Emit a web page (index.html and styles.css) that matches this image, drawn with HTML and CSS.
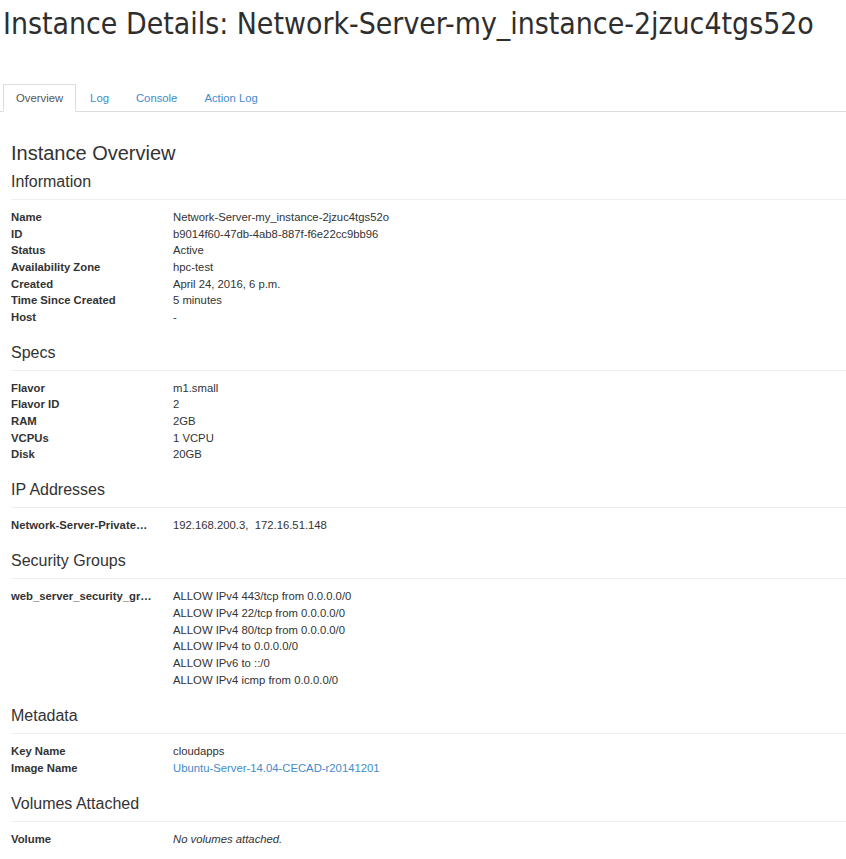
FILE: index.html
```html
<!DOCTYPE html>
<html>
<head>
<meta charset="utf-8">
<link rel="stylesheet" href="styles.css">
</head>
<body>
<div class="page-header">
  <h1 class="title">Instance Details: Network-Server-my_instance-2jzuc4tgs52o</h1>
</div>
<ul class="tabs">
  <li class="tab active"><a>Overview</a></li>
  <li class="tab"><a>Log</a></li>
  <li class="tab"><a>Console</a></li>
  <li class="tab"><a>Action Log</a></li>
</ul>
<div class="content">
  <h3 class="overview-title">Instance Overview</h3>

  <section class="info-section">
    <h4 class="section-title">Information</h4>
    <hr class="divider">
    <dl class="details">
      <dt>Name</dt><dd>Network-Server-my_instance-2jzuc4tgs52o</dd>
      <dt>ID</dt><dd>b9014f60-47db-4ab8-887f-f6e22cc9bb96</dd>
      <dt>Status</dt><dd>Active</dd>
      <dt>Availability Zone</dt><dd>hpc-test</dd>
      <dt>Created</dt><dd>April 24, 2016, 6 p.m.</dd>
      <dt>Time Since Created</dt><dd>5 minutes</dd>
      <dt>Host</dt><dd>-</dd>
    </dl>
  </section>

  <section class="info-section">
    <h4 class="section-title">Specs</h4>
    <hr class="divider">
    <dl class="details">
      <dt>Flavor</dt><dd>m1.small</dd>
      <dt>Flavor ID</dt><dd>2</dd>
      <dt>RAM</dt><dd>2GB</dd>
      <dt>VCPUs</dt><dd>1 VCPU</dd>
      <dt>Disk</dt><dd>20GB</dd>
    </dl>
  </section>

  <section class="info-section">
    <h4 class="section-title">IP Addresses</h4>
    <hr class="divider">
    <dl class="details">
      <dt title="Network-Server-Private-Network">Network-Server-Private…</dt><dd>192.168.200.3,&nbsp; 172.16.51.148</dd>
    </dl>
  </section>

  <section class="info-section">
    <h4 class="section-title">Security Groups</h4>
    <hr class="divider">
    <dl class="details">
      <dt title="web_server_security_group">web_server_security_gr…</dt>
      <dd>
        <ul class="rules">
          <li>ALLOW IPv4 443/tcp from 0.0.0.0/0</li>
          <li>ALLOW IPv4 22/tcp from 0.0.0.0/0</li>
          <li>ALLOW IPv4 80/tcp from 0.0.0.0/0</li>
          <li>ALLOW IPv4 to 0.0.0.0/0</li>
          <li>ALLOW IPv6 to ::/0</li>
          <li>ALLOW IPv4 icmp from 0.0.0.0/0</li>
        </ul>
      </dd>
    </dl>
  </section>

  <section class="info-section">
    <h4 class="section-title">Metadata</h4>
    <hr class="divider">
    <dl class="details">
      <dt>Key Name</dt><dd>cloudapps</dd>
      <dt>Image Name</dt><dd><a class="link">Ubuntu-Server-14.04-CECAD-r20141201</a></dd>
    </dl>
  </section>

  <section class="info-section">
    <h4 class="section-title">Volumes Attached</h4>
    <hr class="divider">
    <dl class="details">
      <dt>Volume</dt><dd><em>No volumes attached.</em></dd>
    </dl>
  </section>
</div>
</body>
</html>
```

FILE: styles.css
```css
html, body {
  margin: 0;
  padding: 0;
  background: #fff;
}
body {
  font-family: "Liberation Sans", Arial, sans-serif;
  font-size: 11.3px;
  color: #333;
}
.page-header {
  padding: 5px 0 0 3px;
}
.title {
  margin: 0;
  font-family: "DejaVu Sans Condensed", "DejaVu Sans", sans-serif;
  font-weight: normal;
  font-size: 29.9px;
  line-height: 38px;
  color: #2e2e2e;
  white-space: nowrap;
}
.tabs {
  list-style: none;
  margin: 41px 0 0 0;
  padding: 0 0 0 3px;
  display: flex;
  border-bottom: 1px solid #ddd;
}
.tab {
  margin: 0 1px -1px 0;
}
.tab a {
  display: block;
  padding: 0 12px;
  line-height: 26px;
  border: 1px solid transparent;
  color: #428bca;
}
.tab.active a {
  border-color: #ddd #ddd transparent #ddd;
  color: #555;
  background: #fff;
}
.content {
  padding: 0 0 0 11px;
}
.overview-title {
  margin: 29px 0 7px 0;
  font-size: 20px;
  line-height: 24px;
  font-weight: normal;
}
.section-title {
  margin: 0 0 7px 0;
  font-size: 16px;
  line-height: 20px;
  font-weight: normal;
}
.divider {
  margin: 0 0 9px 0;
  border: 0;
  border-top: 1px solid #eee;
}
.details {
  display: grid;
  grid-template-columns: 162px 1fr;
  margin: 0 0 17.2px 0;
  line-height: 16.65px;
}
.details dt {
  font-weight: bold;
  white-space: nowrap;
}
.details dd {
  margin: 0;
}
.rules {
  list-style: none;
  margin: 0;
  padding: 0;
  line-height: 16.8px;
}
.link {
  color: #428bca;
}
```
